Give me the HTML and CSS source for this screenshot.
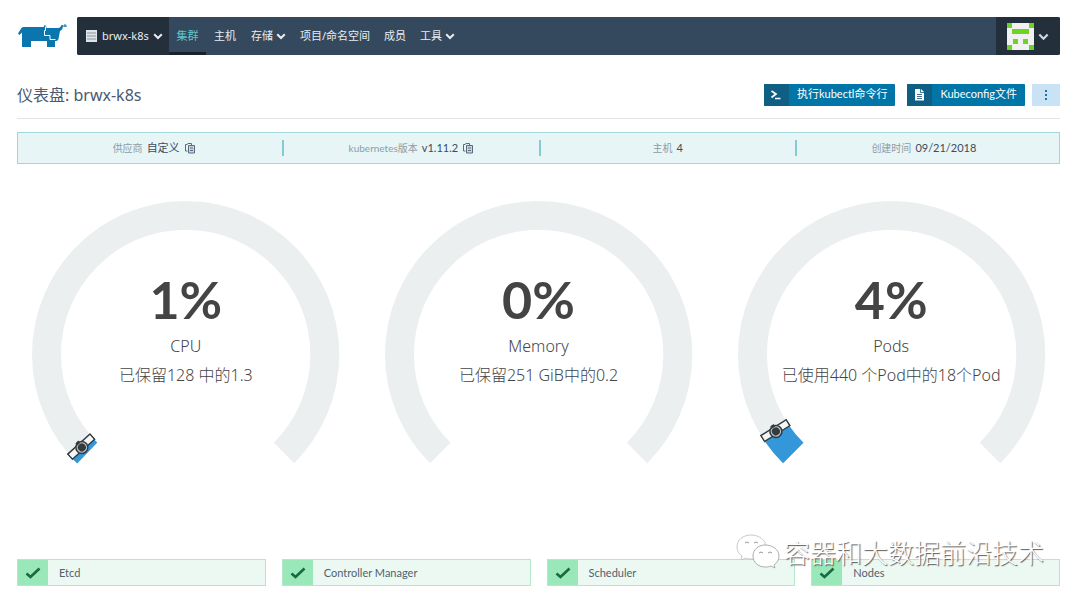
FILE: index.html
```html
<!DOCTYPE html>
<html lang="zh-CN">
<head>
<meta charset="utf-8">
<title>仪表盘: brwx-k8s</title>
<link rel="stylesheet" href="styles.css">
</head>
<body>
<svg class="defs" width="0" height="0" aria-hidden="true">
  <symbol id="chevron" viewBox="0 0 10 8"><path d="M1.2 2.2 5 6l3.800-3.800" fill="none" stroke="currentColor" stroke-width="2"/></symbol>
  <symbol id="copy" viewBox="0 0 12 12"><path d="M3.500 9H1.500V2.500h2M3.500 1.500h4v2" fill="none" stroke="currentColor"/><path d="M4.500 3.500h6v7.500h-6z" fill="#c9d6e2" stroke="currentColor"/><path d="M6 6h3M6 8.500h3" stroke="currentColor"/></symbol>
  <symbol id="check" viewBox="0 0 16 12"><path d="M1.500 6.500 5.500 10 14.500 1.500" fill="none" stroke="currentColor" stroke-width="2.600"/></symbol>
  <symbol id="marker" viewBox="-16 -8 32 16"><path d="M-15-4.500h30v7h-30z" fill="#f4f6f6" stroke="#333b3e" stroke-width="1.500"/><circle r="6" fill="#b9c5cb" stroke="#333b3e" stroke-width="1.500"/><circle r="4" fill="#333b3e"/><path d="M-2-6h4" stroke="#333b3e" stroke-width="3"/></symbol>
</svg>
<header class="header">
  <a class="logo" href="#" aria-label="Rancher">
    <svg width="52" height="24" viewBox="0 0 52 24"><path fill="#0b76ad" d="M6 3H27V1.500h2L29.500 4H41q2.500 0 3.500-3h1.500q0 5-3 6l-1.500 8q-.500 2-2.500 2h-1v6h-8v-6H14v6H5V8.500L2.500 11 1 9.500 4.500 4z"/><path d="M28.500 2.500v4h-1v5h5.500v4h5.500" fill="none" stroke="#fff"/><path d="M46 2h4M48 0v3" stroke="#0b76ad" stroke-width="1"/></svg>
  </a>
  <nav class="nav">
    <button class="cluster" type="button">
      <svg width="12" height="12" viewBox="0 0 12 12"><path fill="#dfe5e8" d="M0 0h11v12H0z"/><path d="M1 3h9M1 6h9M1 9h9" stroke="#8a959d"/></svg>
      <span>brwx-k8s</span>
      <svg width="10" height="8"><use href="#chevron"/></svg>
    </button>
    <a class="item active" href="#">集群</a>
    <a class="item" href="#">主机</a>
    <a class="item" href="#">存储<svg width="10" height="8"><use href="#chevron"/></svg></a>
    <a class="item" href="#">项目/命名空间</a>
    <a class="item" href="#">成员</a>
    <a class="item" href="#">工具<svg width="10" height="8"><use href="#chevron"/></svg></a>
    <button class="user" type="button" aria-label="用户">
      <svg width="27" height="27" viewBox="0 0 27 27"><path fill="#f1f1f1" d="M0 0h27v27H0z"/><path fill="#6bd425" d="M0 0h5v5H0zM22 0h5v5h-5zM5 6h17v5H5zM0 22h5v5H0zM22 22h5v5h-5zM6 16h5v5H6zM16 16h5v5h-5z"/></svg>
      <svg width="11" height="9"><use href="#chevron"/></svg>
    </button>
  </nav>
</header>
<main class="main">
  <div class="title-row">
    <h1>仪表盘: brwx-k8s</h1>
    <div class="actions">
      <button class="btn" type="button"><span class="btn-icon"><svg width="12" height="10" viewBox="0 0 12 10"><path d="M1.500 1 6 4 1.500 7.500M5 8.500h5.500" fill="none" stroke="#fff" stroke-width="1.700"/></svg></span><span class="btn-label">执行kubectl命令行</span></button>
      <button class="btn" type="button"><span class="btn-icon"><svg width="9" height="12" viewBox="0 0 9 12"><path fill="#fff" d="M0 0h6l3 3v8.500H0z"/><path d="M5.500 0v3.500H9M2 5.500h5M2 7.500h5M2 9.500h5" fill="none" stroke="#0f5577" stroke-width=".8"/></svg></span><span class="btn-label">Kubeconfig文件</span></button>
      <button class="more" type="button" aria-label="更多"><svg width="4" height="10" viewBox="0 0 4 10"><path fill="#1279a9" d="M1 0h2v2H1zM1 4h2v2H1zM1 8h2v2H1z"/></svg></button>
    </div>
  </div>
  <section class="info">
    <div><span class="key">供应商</span><span>自定义</span><svg width="12" height="12"><use href="#copy"/></svg></div>
    <div><span class="key">kubernetes版本</span><span>v1.11.2</span><svg width="12" height="12"><use href="#copy"/></svg></div>
    <div><span class="key">主机</span><span>4</span></div>
    <div><span class="key">创建时间</span><span>09/21/2018</span></div>
  </section>
  <section class="gauges">
    <div class="gauge">
      <svg viewBox="-154 -154 308 264"><path class="track" d="M-98.600 98.600A139.500 139.500 0 1 1 98.600 98.600"/><path class="value" d="M-98.600 98.600A139.500 139.500 0 0 1-105 92"/><use href="#marker" x="-16" y="-8" width="32" height="16" transform="translate(-104 93) rotate(-42)"/></svg>
      <div class="reading"><strong>1%</strong><span class="name">CPU</span><span class="detail">已保留128 中的1.3</span></div>
    </div>
    <div class="gauge">
      <svg viewBox="-154 -154 308 264"><path class="track" d="M-98.600 98.600A139.500 139.500 0 1 1 98.600 98.600"/></svg>
      <div class="reading"><strong>0%</strong><span class="name">Memory</span><span class="detail">已保留251 GiB中的0.2</span></div>
    </div>
    <div class="gauge">
      <svg viewBox="-154 -154 308 264"><path class="track" d="M-98.600 98.600A139.500 139.500 0 1 1 98.600 98.600"/><path class="value" d="M-98.600 98.600A139.500 139.500 0 0 1-115 79"/><use href="#marker" x="-16" y="-8" width="32" height="16" transform="translate(-116 77) rotate(-32)"/></svg>
      <div class="reading"><strong>4%</strong><span class="name">Pods</span><span class="detail">已使用440 个Pod中的18个Pod</span></div>
    </div>
  </section>
  <section class="statuses">
    <div class="status"><span class="tick"><svg width="16" height="12"><use href="#check"/></svg></span><span>Etcd</span></div>
    <div class="status"><span class="tick"><svg width="16" height="12"><use href="#check"/></svg></span><span>Controller Manager</span></div>
    <div class="status"><span class="tick"><svg width="16" height="12"><use href="#check"/></svg></span><span>Scheduler</span></div>
    <div class="status"><span class="tick"><svg width="16" height="12"><use href="#check"/></svg></span><span>Nodes</span></div>
    <div class="watermark">
      <svg width="44" height="36" viewBox="0 0 44 36"><g fill="#fff" stroke="#bbb" stroke-width=".8"><path d="M15 1C7 1 1 6 1 13c0 4 2 7 5 9l-1 4 5-2c2 1 4 1 7 1 8 0 13-5 13-12S23 1 15 1z"/><path d="M29 11c-7 0-12 5-12 11s5 11 12 11c2 0 4 0 6-1l4 2-1-3c3-2 5-5 5-9 0-6-6-11-14-11z" stroke="#999"/></g><g fill="none" stroke="#999"><path d="M9 9q2-2 4 0M18 9q2-2 4 0M23 19q2-2 4 0M32 19q2-2 4 0"/></g></svg>
      <span>容器和大数据前沿技术</span>
    </div>
  </section>
</main>
</body>
</html>
```
FILE: styles.css
```css
* { box-sizing: border-box; }
body {
  margin: 0;
  padding: 17px 20px 0 17px;
  background: #fff;
  color: #3c4c5c;
  font-family: "Noto Sans", "Noto Sans CJK SC", sans-serif;
  font-size: 11px;
  line-height: 16px;
}
button { border: 0; padding: 0; font: inherit; color: inherit; cursor: pointer; }
a { color: inherit; text-decoration: none; }
svg { display: block; flex: none; }
.defs { position: absolute; }

.header { display: flex; height: 38px; }
.logo { width: 60px; padding-top: 7px; }
.nav { flex: 1; display: flex; background: #34495e; color: #e8edf0; border-radius: 2px; overflow: hidden; }
.cluster { width: 92px; display: flex; align-items: center; gap: 4px; padding-left: 9px; background: #232f3b; }
.item { display: flex; align-items: center; gap: 3px; padding: 0 7px; }
.item.active { width: 37px; justify-content: center; color: #5fc5cc; border-bottom: 3px solid #17222c; padding-top: 3px; }
.item.active + .item { padding: 0 8px; }
.user { margin-left: auto; width: 64px; display: flex; align-items: center; gap: 4px; padding-left: 11px; background: #232f3b; color: #cfd8df; }

.title-row { display: flex; justify-content: space-between; align-items: center; height: 64px; padding-top: 17px; border-bottom: 1px solid #e2e5e8; }
h1 { margin: 0; font-size: 16px; font-weight: 400; line-height: 24px; color: #4a5a70; }
.actions { display: flex; }
.btn { display: flex; height: 22px; margin-right: 12px; background: #0075a8; color: #fff; border-radius: 1px; overflow: hidden; font-family: Lato, "Noto Sans CJK SC", sans-serif; }
.btn + .btn { margin-right: 7px; }
.btn-icon { width: 25px; height: 22px; display: flex; align-items: center; justify-content: center; background: #0f5e83; }
.btn-label { padding: 0 8px; line-height: 20px; }
.more { width: 28px; height: 22px; display: flex; align-items: center; justify-content: center; background: #c9e3f4; }

.info { display: grid; grid-template-columns: repeat(4, 1fr); margin-top: 13px; padding: 7px 8px; border: 1px solid #a3d6d6; background: #e7f5f7; font-family: Lato, "Noto Sans CJK SC", sans-serif; }
.info > div { display: flex; align-items: center; justify-content: center; gap: 4px; height: 16px; }
.info > div + div { border-left: 2px solid #84cccf; }
.info svg { color: #5b6a7a; }
.info .key { font-size: 10px; color: #8f9ca4; }

.gauges { display: grid; grid-template-columns: repeat(3, 1fr); gap: 15px; margin-top: 37px; }
.gauge { display: grid; justify-items: center; }
.gauge > * { grid-area: 1 / 1; }
.gauge > svg { width: 91%; overflow: visible; }
.track, .value { fill: none; stroke: #ebeff0; stroke-width: 29; }
.value { stroke: #3497da; }
.reading { z-index: 1; display: flex; flex-direction: column; align-items: center; padding-top: 65px; font-size: 16px; color: #444; font-weight: 300; }
.reading strong { font-family: Lato, sans-serif; font-size: 52px; line-height: 66px; font-weight: 700; }
.name { line-height: 28px; }
.detail { line-height: 30px; }

.statuses { position: relative; display: grid; grid-template-columns: repeat(4, 1fr); gap: 16px; margin-top: 95px; font-family: Lato, sans-serif; }
.status { display: flex; align-items: center; gap: 11px; height: 27px; border: 1px solid #b5e5cb; background: #ecf9f3; color: #50616f; }
.tick { width: 30px; height: 25px; display: flex; align-items: center; justify-content: center; background: #9ae7b9; color: #176b42; }
.watermark { position: absolute; right: 16px; bottom: 15px; display: flex; align-items: center; gap: 4px; color: #fff; font-family: "Noto Sans CJK SC", sans-serif; font-size: 26px; line-height: 38px; font-weight: 300; text-shadow: 1px 1px 1px #555; }
```
